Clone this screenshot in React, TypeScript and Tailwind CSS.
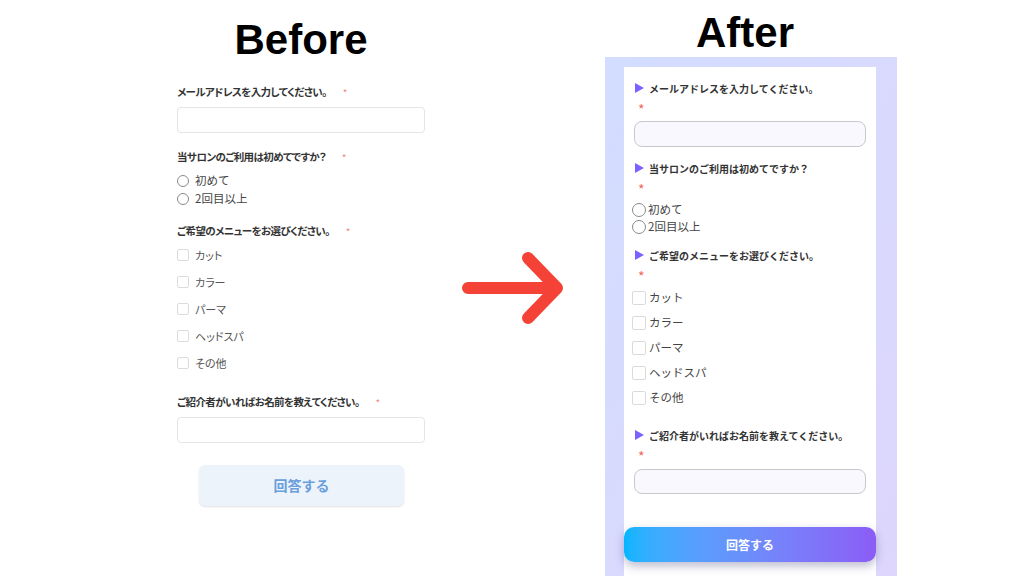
import React from 'react'

const jp = "font-['Noto_Sans_CJK_JP','Noto_Sans',sans-serif]"

const menus = ['カット', 'カラー', 'パーマ', 'ヘッドスパ', 'その他']

function BeforeLabel({ text, className = '' }: { text: string; className?: string }) {
  return (
    <div className={`flex items-center h-[16px] ${className}`}>
      <span className="text-[10.5px] font-bold text-[#333] [font-feature-settings:'palt'] tracking-[-0.6px]">{text}</span>
      <span className="ml-[16px] text-[10px] text-[#f28b82]">*</span>
    </div>
  )
}

function AfterLabel({ text, className = '' }: { text: string; className?: string }) {
  return (
    <>
      <div className={`flex items-center h-[16px] pl-[1px] ${className}`}>
        <svg width="9" height="10" viewBox="0 0 9 10" className="shrink-0">
          <polygon points="0,0 9,5 0,10" fill="#7b61ff" />
        </svg>
        <span className="ml-[5px] text-[10px] font-bold text-[#333]">{text}</span>
      </div>
      <div className="h-[16px] mt-[5px] pl-[4px] flex items-center text-[14px] leading-none text-[#ef6b5a]">*</div>
    </>
  )
}

export default function App() {
  return (
    <div className={`w-[1024px] h-[576px] overflow-hidden bg-white flex items-start ${jp}`}>
      {/* Before */}
      <div className="ml-[177px] w-[248px] flex flex-col">
        <h1 className="pt-[19px] h-[61px] text-center text-[42px] leading-none font-bold text-black font-['Liberation_Sans',Arial,sans-serif]">
          Before
        </h1>
        <BeforeLabel text="メールアドレスを入力してください。" className="mt-[23px]" />
        <div className="mt-[7px] h-[26px] rounded-[4px] border border-[#e3e5e8]" />

        <BeforeLabel text="当サロンのご利用は初めてですか？" className="mt-[16px]" />
        <div className="mt-[7px] flex flex-col">
          {['初めて', '2回目以上'].map((o) => (
            <div key={o} className="h-[18px] flex items-center">
              <span className="w-[12px] h-[12px] rounded-full border border-[#8a8a8a]" />
              <span className="ml-[6px] text-[11.5px] text-[#444]">{o}</span>
            </div>
          ))}
        </div>

        <BeforeLabel text="ご希望のメニューをお選びください。" className="mt-[15px]" />
        <div className="mt-[7px] flex flex-col gap-[9px]">
          {menus.map((m) => (
            <div key={m} className="h-[18px] flex items-center">
              <span className="w-[12px] h-[12px] rounded-[2px] border border-[#dcdcdc]" />
              <span className="ml-[6px] text-[11px] text-[#555] [font-feature-settings:'palt']">{m}</span>
            </div>
          ))}
        </div>

        <BeforeLabel text="ご紹介者がいればお名前を教えてください。" className="mt-[22px]" />
        <div className="mt-[7px] h-[26px] rounded-[4px] border border-[#e3e5e8]" />

        <button
          type="button"
          className="mt-[22px] ml-[22px] w-[205px] h-[41px] rounded-[6px] bg-[#edf3fb] shadow-[0_1px_2px_rgba(0,0,0,0.12)] text-[14px] font-bold text-[#6a9fdc]"
        >
          回答する
        </button>
      </div>

      {/* Arrow */}
      <svg width="115" height="80" viewBox="0 0 115 80" className="ml-[30px] mt-[248px] shrink-0">
        <path
          d="M13 40 H101 M73 10 L102 40 L73 70"
          fill="none"
          stroke="#f44336"
          strokeWidth="12"
          strokeLinecap="round"
          strokeLinejoin="round"
        />
      </svg>

      {/* After */}
      <div className="ml-[35px] w-[292px] flex flex-col">
        <h1 className="pt-[12px] h-[54px] text-center text-[42px] leading-none font-bold text-black font-['Liberation_Sans',Arial,sans-serif] -ml-[12px]">
          After
        </h1>
        <div className="mt-[3px] h-[519px] pt-[10px] pl-[19px] pr-[21px] bg-gradient-to-br from-[#d2ddff] to-[#ded6fc]">
          <div className="h-full bg-white px-[10px] pt-[13px] flex flex-col">
            <AfterLabel text="メールアドレスを入力してください。" />
            <div className="mt-[4px] h-[26px] rounded-[8px] border-[1.5px] border-[#c9c9cc] bg-[#f8f8fe]" />

            <AfterLabel text="当サロンのご利用は初めてですか？" className="mt-[13px]" />
            <div className="mt-[4px] -ml-[2px] flex flex-col">
              {['初めて', '2回目以上'].map((o) => (
                <div key={o} className="h-[17px] flex items-center">
                  <span className="w-[14px] h-[14px] rounded-full border-[1.5px] border-[#8a8a8a]" />
                  <span className="ml-[2px] text-[11.5px] text-[#444]">{o}</span>
                </div>
              ))}
            </div>

            <AfterLabel text="ご希望のメニューをお選びください。" className="mt-[12px]" />
            <div className="mt-[5px] -ml-[2px] flex flex-col gap-[7px]">
              {menus.map((m) => (
                <div key={m} className="h-[18px] flex items-center">
                  <span className="w-[14px] h-[14px] rounded-[2px] border border-[#dadada]" />
                  <span className="ml-[3px] text-[11.5px] text-[#444]">{m}</span>
                </div>
              ))}
            </div>

            <AfterLabel text="ご紹介者がいればお名前を教えてください。" className="mt-[20px]" />
            <div className="mt-[5px] h-[25px] rounded-[8px] border-[1.5px] border-[#c9c9cc] bg-[#f8f8fe]" />

            <button
              type="button"
              className="mt-[33px] -mx-[10px] h-[35px] rounded-[10px] bg-gradient-to-r from-[#00b6ff] to-[#8b5cf6] shadow-[0_4px_10px_rgba(60,60,120,0.35)] text-[12px] font-bold text-white"
            >
              回答する
            </button>
          </div>
        </div>
      </div>
    </div>
  )
}
